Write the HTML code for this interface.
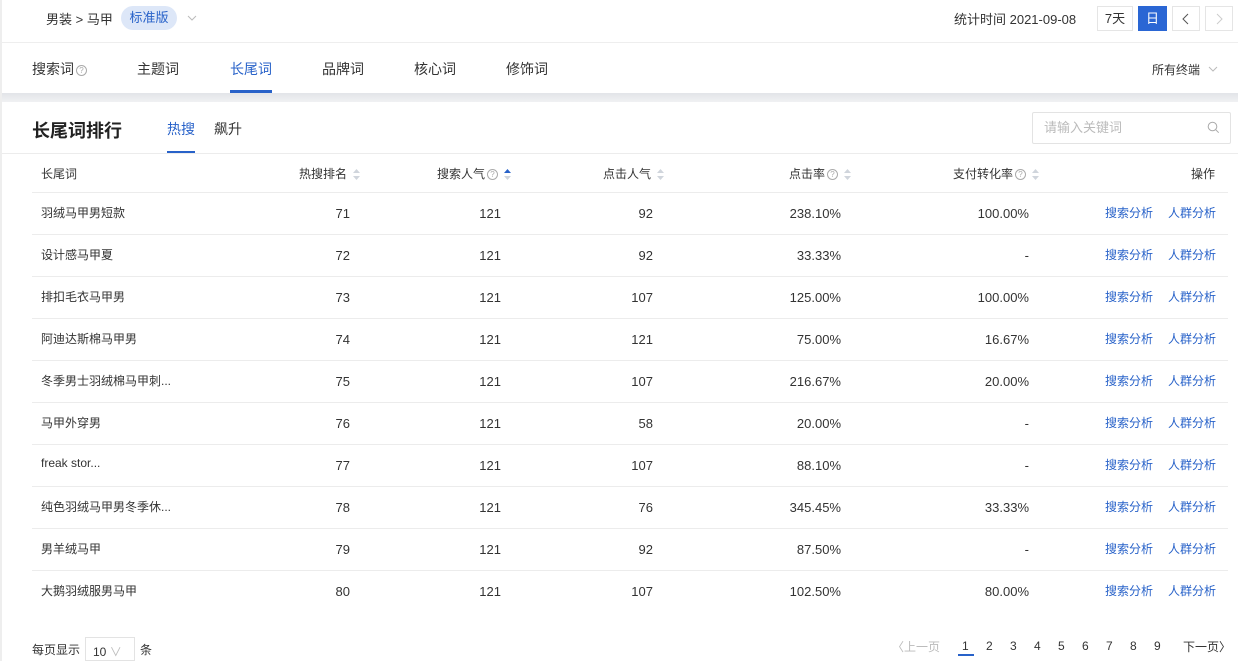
<!DOCTYPE html>
<html><head><meta charset="utf-8"><style>
*{margin:0;padding:0;box-sizing:border-box}
body{width:1238px;height:661px;overflow:hidden;background:#fff;font-family:"Liberation Sans","Noto Sans CJK SC",sans-serif;color:#333;font-size:13px;position:relative}
.a{position:absolute;white-space:nowrap}
.blue{color:#2862c9}
.r{text-align:right}
.hl{position:absolute;left:32px;width:1196px;height:1px;background:#ececec}
.sort{display:inline-block;width:7px;vertical-align:middle;margin-left:6px}
.q{display:inline-block;width:11px;height:11px;border:1px solid #aaa;border-radius:50%;font-size:8px;line-height:9px;text-align:center;color:#aaa;vertical-align:middle;margin-left:2px}
</style></head><body>
<div class="a" style="left:0;top:0;width:2px;height:661px;background:#eee"></div>
<div class="a" style="left:46px;top:9px;font-size:13px">男装 &gt; 马甲</div>
<div class="a" style="left:121px;top:6px;width:56px;height:24px;border-radius:12px;background:#dde7f8;color:#2862c9;font-size:13px;line-height:24px;text-align:center">标准版</div>
<svg class="a" style="left:187px;top:14px" width="10" height="8"><path d="M1 2l4 4 4-4" stroke="#bbb" fill="none"/></svg>
<div class="a" style="left:954px;top:9px;font-size:13px">统计时间 2021-09-08</div>
<div class="a" style="left:1097px;top:6px;width:36px;height:25px;border:1px solid #e5e5e5;text-align:center;line-height:23px">7天</div>
<div class="a" style="left:1138px;top:6px;width:29px;height:25px;background:#2a66d4;color:#fff;text-align:center;line-height:25px">日</div>
<div class="a" style="left:1172px;top:6px;width:28px;height:25px;border:1px solid #e5e5e5"><svg width="26" height="23"><path d="M15 7l-5 5 5 5" stroke="#555" fill="none"/></svg></div>
<div class="a" style="left:1205px;top:6px;width:28px;height:25px;border:1px solid #e5e5e5"><svg width="26" height="23"><path d="M11 7l5 5-5 5" stroke="#ccc" fill="none"/></svg></div>
<div class="a" style="left:2px;top:42px;width:1236px;height:1px;background:#eee"></div>
<div class="a" style="left:32px;top:59px;font-size:14px">搜索词<span class="q">?</span></div>
<div class="a" style="left:137px;top:59px;font-size:14px">主题词</div>
<div class="a blue" style="left:230px;top:59px;font-size:14px">长尾词</div>
<div class="a" style="left:230px;top:90px;width:42px;height:3px;background:#2862c9"></div>
<div class="a" style="left:322px;top:59px;font-size:14px">品牌词</div>
<div class="a" style="left:414px;top:59px;font-size:14px">核心词</div>
<div class="a" style="left:506px;top:59px;font-size:14px">修饰词</div>
<div class="a" style="left:1152px;top:61px;font-size:12px">所有终端</div>
<svg class="a" style="left:1208px;top:65px" width="10" height="8"><path d="M1 2l4 4 4-4" stroke="#bbb" fill="none"/></svg>
<div class="a" style="left:2px;top:93px;width:1236px;height:9px;background:linear-gradient(#e2e4e8,#f0f1f3)"></div>
<div class="a" style="left:32px;top:117px;font-size:18px;font-weight:bold;color:#222">长尾词排行</div>
<div class="a blue" style="left:167px;top:119px;font-size:14px">热搜</div>
<div class="a" style="left:167px;top:151px;width:28px;height:2px;background:#2862c9"></div>
<div class="a" style="left:214px;top:119px;font-size:14px">飙升</div>
<div class="a" style="left:1032px;top:112px;width:199px;height:32px;border:1px solid #e3e3e3;border-radius:2px;color:#bbb;font-size:13px;line-height:30px;padding-left:11px">请输入关键词</div>
<svg class="a" style="left:1207px;top:121px" width="13" height="13"><circle cx="5.5" cy="5.5" r="4.3" stroke="#aaa" fill="none"/><path d="M8.7 8.7l3 3" stroke="#aaa"/></svg>
<div class="a" style="left:2px;top:153px;width:1236px;height:1px;background:#ececec"></div>
<div style="position:absolute;top:165px;left:0;width:1238px;font-size:12px;color:#333">
<div class="a" style="left:41px">长尾词</div>
<div class="a" style="left:299px">热搜排名<svg class="sort" width="7" height="11"><path d="M0 4l3.5-4 3.5 4z M0 7l3.5 4 3.5-4z" fill="#d0d5dc"/></svg></div>
<div class="a" style="left:437px">搜索人气<span class="q">?</span><svg class="sort" width="7" height="11"><path d="M0 4l3.5-4 3.5 4z" fill="#2862c9"/><path d="M0 7l3.5 4 3.5-4z" fill="#d0d5dc"/></svg></div>
<div class="a" style="left:603px">点击人气<svg class="sort" width="7" height="11"><path d="M0 4l3.5-4 3.5 4z M0 7l3.5 4 3.5-4z" fill="#d0d5dc"/></svg></div>
<div class="a" style="left:789px">点击率<span class="q">?</span><svg class="sort" width="7" height="11"><path d="M0 4l3.5-4 3.5 4z M0 7l3.5 4 3.5-4z" fill="#d0d5dc"/></svg></div>
<div class="a" style="left:953px">支付转化率<span class="q">?</span><svg class="sort" width="7" height="11"><path d="M0 4l3.5-4 3.5 4z M0 7l3.5 4 3.5-4z" fill="#d0d5dc"/></svg></div>
<div class="a" style="left:1191px">操作</div>
</div>
<div class="hl" style="top:192px"></div>
<div id="rows"></div>
<script>
var d=[["羽绒马甲男短款",71,92,"238.10%","100.00%"],["设计感马甲夏",72,92,"33.33%","-"],["排扣毛衣马甲男",73,107,"125.00%","100.00%"],["阿迪达斯棉马甲男",74,121,"75.00%","16.67%"],["冬季男士羽绒棉马甲刺...",75,107,"216.67%","20.00%"],["马甲外穿男",76,58,"20.00%","-"],["freak stor...",77,107,"88.10%","-"],["纯色羽绒马甲男冬季休...",78,76,"345.45%","33.33%"],["男羊绒马甲",79,92,"87.50%","-"],["大鹅羽绒服男马甲",80,107,"102.50%","80.00%"]];
var h="";d.forEach(function(r,i){var t=193+i*42,y=t+13;
h+='<div class="a" style="left:41px;top:'+(y-2)+'px;font-size:12px">'+r[0]+'</div>'+
'<div class="a r" style="left:250px;width:100px;top:'+y+'px">'+r[1]+'</div>'+
'<div class="a r" style="left:400px;width:101px;top:'+y+'px">121</div>'+
'<div class="a r" style="left:553px;width:100px;top:'+y+'px">'+r[2]+'</div>'+
'<div class="a r" style="left:741px;width:100px;top:'+y+'px">'+r[3]+'</div>'+
'<div class="a r" style="left:929px;width:100px;top:'+y+'px">'+r[4]+'</div>'+
'<div class="a blue" style="left:1105px;top:'+(y-2)+'px;font-size:12px">搜索分析</div>'+
'<div class="a blue" style="left:1168px;top:'+(y-2)+'px;font-size:12px">人群分析</div>'+
(i<9?'<div class="hl" style="top:'+(t+41)+'px"></div>':'');});
for(var k=1;k<=9;k++)h+='<div class="a" style="left:'+(962+(k-1)*24)+'px;top:639px;font-size:12px">'+k+'</div>';
document.getElementById("rows").innerHTML=h;
</script>
<div class="a" style="left:32px;top:641px;font-size:12px">每页显示</div>
<div class="a" style="left:85px;top:637px;width:50px;height:24px;border:1px solid #e3e3e3;font-size:12px;padding:5px 0 0 7px">10 <span style="color:#bbb">∨</span></div>
<div class="a" style="left:140px;top:641px;font-size:12px">条</div>
<div class="a" style="left:892px;top:638px;font-size:12px;color:#bbb">〈上一页</div>
<div class="a" style="left:958px;top:654px;width:16px;height:2px;background:#2862c9"></div>
<div class="a" style="left:1183px;top:638px;font-size:12px">下一页〉</div>
</body></html>
